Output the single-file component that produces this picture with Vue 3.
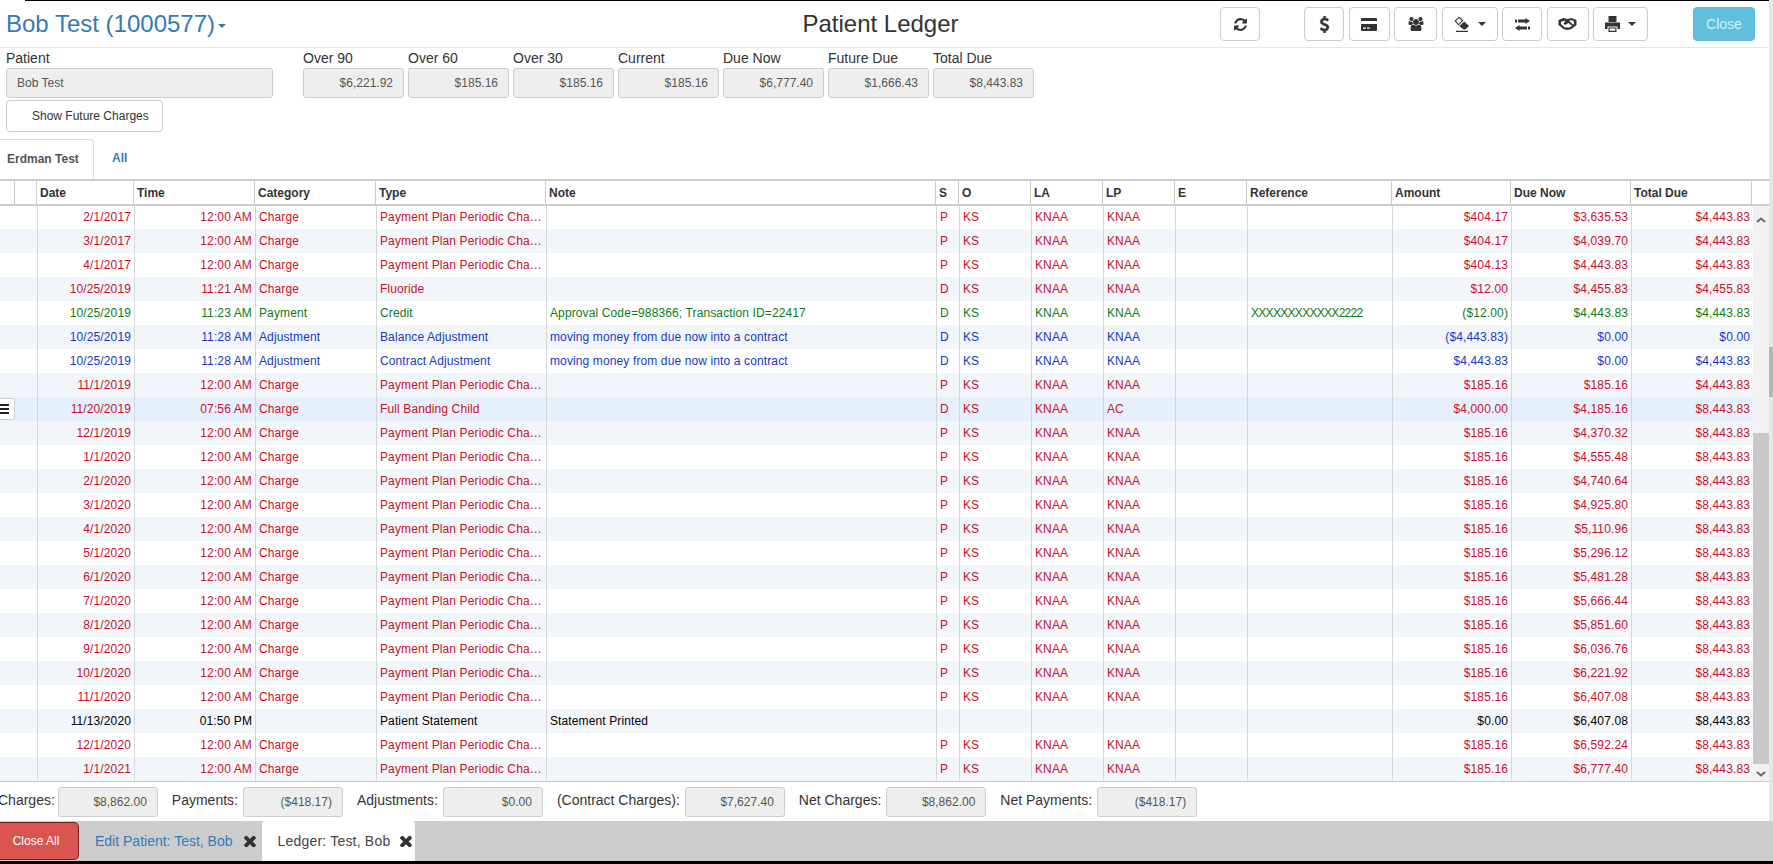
<template>
  <div class="page">
    <div class="shell">
      <div class="content">
        <div class="topline"></div>

        <!-- header -->
        <div class="header">
          <div class="patient-link">Bob Test (1000577)<span class="title-caret"></span></div>
          <div class="page-title">Patient Ledger</div>
          <div class="actions">
            <button class="btn w40 refresh">
              <svg width="15" height="15" viewBox="0 0 1792 1792"><path d="M1639 1056q0 5-1 7-64 268-268 434.5t-478 166.5q-146 0-282.5-55t-243.5-157l-129 129q-19 19-45 19t-45-19-19-45v-448q0-26 19-45t45-19h448q26 0 45 19t19 45-19 45l-137 137q71 66 161 102t187 36q134 0 250-65t186-179q11-17 53-117 8-23 30-23h192q13 0 22.5 9.5t9.5 22.5zm25-800v448q0 26-19 45t-45 19h-448q-26 0-45-19t-19-45 19-45l138-138q-148-137-349-137-134 0-250 65t-186 179q-11 17-53 117-8 23-30 23h-199q-13 0-22.5-9.5t-9.5-22.5v-7q65-268 270-434.5t480-166.5q146 0 284 55.5t245 156.5l130-129q19-19 45-19t45 19 19 45z" /></svg>
            </button>
            <button class="btn w40">
              <svg class="heavy" width="17" height="17" viewBox="0 0 1792 1792"><path d="M1362 1185q0 153-99.5 263.5t-258.5 136.5v175q0 14-9 23t-23 9h-135q-13 0-22.5-9.5t-9.5-22.5v-175q-66-9-127.5-31t-101.5-44.5-74-48-46.5-37.5-17.5-18q-17-21-2-41l103-135q7-10 23-12 15-2 24 9l2 2q113 99 243 125 37 8 74 8 81 0 142.5-43t61.5-122q0-28-15-53t-33.5-42-58.5-37.5-66-32-80-32.5q-39-16-61.5-25t-61.5-26.5-62.5-31-56.5-35.5-53.5-42.5-43.5-49-35.5-58-21-66.5-8.5-78q0-138 98-242t255-134v-180q0-13 9.5-22.5t22.5-9.5h135q14 0 23 9t9 23v176q57 6 110.5 23t87 33.5 63.5 37.5 39 29 15 14q17 18 5 38l-81 146q-8 15-23 16-14 3-27-7-3-3-14.5-12t-39-26.5-58.5-32-74.5-26-85.5-11.5q-95 0-155 43t-60 111q0 26 8.5 48t29.5 41.5 39.5 33 56 31 60.5 27 70 27.5q53 20 81 31.5t76 35 75.5 42.5 62 50 53 63.5 31.5 76.5 13 94z" /></svg>
            </button>
            <button class="btn w41">
              <svg width="16" height="13" viewBox="0 0 16 13">
                <path d="M1 0h14a1 1 0 0 1 1 1v2H0V1a1 1 0 0 1 1-1z" />
                <path d="M0 6h16v6a1 1 0 0 1-1 1H1a1 1 0 0 1-1-1z" />
                <rect x="2" y="9.5" width="3" height="1.2" fill="#fff" />
                <rect x="6" y="9.5" width="3" height="1.2" fill="#fff" />
              </svg>
            </button>
            <button class="btn w43">
              <svg width="18" height="14" viewBox="0 0 1920 1792"><path d="M593 896q-162 5-265 128h-134q-82 0-138-40.5t-56-118.5q0-353 124-353 6 0 43.5 21t97.5 42.5 119 21.5q67 0 133-23-5 37-5 66 0 139 81 256zm1071 637q0 120-73 189.5t-194 69.5h-874q-121 0-194-69.5t-73-189.5q0-53 3.5-103.5t14-109 26.5-108.5 43-97.5 62-81 85.5-53.5 111.5-20q10 0 43 21.5t73 48 107 48 135 21.5 135-21.5 107-48 73-48 43-21.5q61 0 111.5 20t85.5 53.5 62 81 43 97.5 26.5 108.5 14 109 3.5 103.5zm-1024-1277q0 106-75 181t-181 75-181-75-75-181 75-181 181-75 181 75 75 181zm704 384q0 159-112.5 271.5t-271.5 112.5-271.5-112.5-112.5-271.5 112.5-271.5 271.5-112.5 271.5 112.5 112.5 271.5zm576 225q0 78-56 118.5t-138 40.5h-134q-103-123-265-128 81-117 81-256 0-29-5-66 66 23 133 23 59 0 119-21.5t97.5-42.5 43.5-21q124 0 124 353zm-128-609q0 106-75 181t-181 75-181-75-75-181 75-181 181-75 181 75 75 181z" /></svg>
            </button>
            <button class="btn w56">
              <svg width="16" height="16" viewBox="0 0 16 16">
                <path d="M5 .5 9.4 4.6 4.6 9.4.5 5zM5 2 2 5l2.6 2.9 3.2-3.2z" fill-rule="evenodd" />
                <path d="M10.2 5.4 15 10l-3.7 3.4h-1.6L5.4 10.2z" />
                <rect x="2" y="14.8" width="12" height="1.2" />
              </svg>
              <span class="caret"></span>
            </button>
            <button class="btn w40">
              <svg width="15" height="13" viewBox="0 0 15 13">
                <path d="M0 1.500h10.500V0L15 3 10.500 6V4.500H0z" />
                <path d="M15 8.500H4.500V7L0 10 4.500 13v-1.500H15z" />
                <rect x="2" y="1" width="1" height="4" fill="#fff" />
                <rect x="12" y="8" width="1" height="4" fill="#fff" />
              </svg>
            </button>
            <button class="btn w42">
              <svg width="19" height="12" viewBox="0 0 18 12">
                <path d="M0 2 5 0l4 1 4-1 5 2v5l-5 4-4 1-4-1-5-4z" />
                <path d="M2.500 3.800 7 2.500 5 5.500l1.500 1.500 3.500-2 3.800 3L10 9.800l-4-.5-3.500-3.300zM10.500 2.600 13.500 2.200l2 1.400v2.200l-1 1z" fill="#fff" />
              </svg>
            </button>
            <button class="btn w55">
              <svg width="15" height="16" viewBox="0 0 15 16">
                <rect x="3.500" y="0" width="8" height="6" />
                <path d="M0 6.500h15V13h-2.500v-2.500h-10V13H0z" />
                <path d="M3.500 11.500h8V16h-8zM4.700 12.600v2.200h5.600v-2.200z" fill-rule="evenodd" />
              </svg>
              <span class="caret"></span>
            </button>
            <button class="btn-close">Close</button>
          </div>
        </div>

        <!-- balances -->
        <div class="summary">
          <div class="field patient-field">
            <label>Patient</label>
            <div class="readonly left">Bob Test</div>
          </div>
          <div v-for="b in balances" :key="b.label" class="field">
            <label>{{ b.label }}</label>
            <div class="readonly">{{ b.value }}</div>
          </div>
        </div>
        <button class="future-btn">Show Future Charges</button>

        <div class="tabs">
          <div class="tab active">Erdman Test</div>
          <div class="tab">All</div>
        </div>

        <!-- ledger grid -->
        <div class="grid">
          <div class="grid-head">
            <div></div>
            <div></div>
            <div v-for="h in headers" :key="h">{{ h }}</div>
            <div></div>
          </div>
          <div class="grid-body">
            <div class="rows">
              <div
                v-for="(r, i) in rows"
                :key="i"
                class="row"
                :class="[r.kind, { odd: i % 2 === 1, selected: i === 8 }]"
              >
                <div></div>
                <div class="r">{{ r.date }}</div>
                <div class="r">{{ r.time }}</div>
                <div>{{ r.cat }}</div>
                <div>{{ r.type }}</div>
                <div>{{ r.note }}</div>
                <div>{{ r.s }}</div>
                <div>{{ r.o }}</div>
                <div>{{ r.la }}</div>
                <div>{{ r.lp }}</div>
                <div></div>
                <div class="ref">{{ r.ref }}</div>
                <div class="r">{{ r.amount }}</div>
                <div class="r">{{ r.due }}</div>
                <div class="r">{{ r.total }}</div>
                <span v-if="i === 8" class="row-menu"><i></i><i></i><i></i></span>
              </div>
            </div>
            <div class="vscroll">
              <div class="arrow-up">
                <svg width="10" height="6" viewBox="0 0 10 6"><path d="M1 5 5 1.500 9 5" /></svg>
              </div>
              <div class="thumb"></div>
              <div class="arrow-down">
                <svg width="10" height="6" viewBox="0 0 10 6"><path d="M1 1 5 4.500 9 1" /></svg>
              </div>
            </div>
          </div>
        </div>

        <!-- totals -->
        <div class="totals">
          <template v-for="t in totals" :key="t.label">
            <span class="total-label">{{ t.label }}</span>
            <div class="readonly total-box">{{ t.value }}</div>
          </template>
        </div>
      </div>
      <div class="page-scroll"><div class="page-thumb"></div></div>
    </div>

    <!-- open windows -->
    <div class="taskbar">
      <button class="close-all">Close All</button>
      <div class="task">
        <span class="task-link">Edit Patient: Test, Bob</span>
        <svg class="x" width="12" height="12" viewBox="300 300 1200 1200"><path d="M1490 1322q0 40-28 68l-136 136q-28 28-68 28t-68-28l-294-294-294 294q-28 28-68 28t-68-28l-136-136q-28-28-28-68t28-68l294-294-294-294q-28-28-28-68t28-68l136-136q28-28 68-28t68 28l294 294 294-294q28-28 68-28t68 28l136 136q28 28 28 68t-28 68l-294 294 294 294q28 28 28 68z" /></svg>
      </div>
      <div class="task current">
        <span>Ledger: Test, Bob</span>
        <svg class="x" width="12" height="12" viewBox="300 300 1200 1200"><path d="M1490 1322q0 40-28 68l-136 136q-28 28-68 28t-68-28l-294-294-294 294q-28 28-68 28t-68-28l-136-136q-28-28-28-68t28-68l294-294-294-294q-28-28-28-68t28-68l136-136q28-28 68-28t68 28l294 294 294-294q28-28 68-28t68 28l136 136q28 28 28 68t-28 68l-294 294 294 294q28 28 28 68z" /></svg>
      </div>
    </div>
    <div class="desktop"></div>
  </div>
</template>

<script setup>
const balances = [
  { label: "Over 90", value: "$6,221.92" },
  { label: "Over 60", value: "$185.16" },
  { label: "Over 30", value: "$185.16" },
  { label: "Current", value: "$185.16" },
  { label: "Due Now", value: "$6,777.40" },
  { label: "Future Due", value: "$1,666.43" },
  { label: "Total Due", value: "$8,443.83" },
];

const headers = ["Date", "Time", "Category", "Type", "Note", "S", "O", "LA", "LP", "E", "Reference", "Amount", "Due Now", "Total Due"];

const totals = [
  { label: "Charges:", value: "$8,862.00" },
  { label: "Payments:", value: "($418.17)" },
  { label: "Adjustments:", value: "$0.00" },
  { label: "(Contract Charges):", value: "$7,627.40" },
  { label: "Net Charges:", value: "$8,862.00" },
  { label: "Net Payments:", value: "($418.17)" },
];

const PLAN = "Payment Plan Periodic Charge";

// plain charge row, most of the ledger looks like this
function charge(date, amount, due, total, extra = {}) {
  return { kind: "charge", date, time: "12:00 AM", cat: "Charge", type: PLAN, note: "", s: "P", o: "KS", la: "KNAA", lp: "KNAA", ref: "", amount, due, total, ...extra };
}

const MOVE = "moving money from due now into a contract";

const rows = [
  charge("2/1/2017", "$404.17", "$3,635.53", "$4,443.83"),
  charge("3/1/2017", "$404.17", "$4,039.70", "$4,443.83"),
  charge("4/1/2017", "$404.13", "$4,443.83", "$4,443.83"),
  charge("10/25/2019", "$12.00", "$4,455.83", "$4,455.83", { time: "11:21 AM", type: "Fluoride", s: "D" }),
  charge("10/25/2019", "($12.00)", "$4,443.83", "$4,443.83", { kind: "payment", time: "11:23 AM", cat: "Payment", type: "Credit", note: "Approval Code=988366; Transaction ID=22417", s: "D", ref: "XXXXXXXXXXXX2222" }),
  charge("10/25/2019", "($4,443.83)", "$0.00", "$0.00", { kind: "adjust", time: "11:28 AM", cat: "Adjustment", type: "Balance Adjustment", note: MOVE, s: "D" }),
  charge("10/25/2019", "$4,443.83", "$0.00", "$4,443.83", { kind: "adjust", time: "11:28 AM", cat: "Adjustment", type: "Contract Adjustment", note: MOVE, s: "D" }),
  charge("11/1/2019", "$185.16", "$185.16", "$4,443.83"),
  charge("11/20/2019", "$4,000.00", "$4,185.16", "$8,443.83", { time: "07:56 AM", type: "Full Banding Child", s: "D", lp: "AC" }),
  charge("12/1/2019", "$185.16", "$4,370.32", "$8,443.83"),
  charge("1/1/2020", "$185.16", "$4,555.48", "$8,443.83"),
  charge("2/1/2020", "$185.16", "$4,740.64", "$8,443.83"),
  charge("3/1/2020", "$185.16", "$4,925.80", "$8,443.83"),
  charge("4/1/2020", "$185.16", "$5,110.96", "$8,443.83"),
  charge("5/1/2020", "$185.16", "$5,296.12", "$8,443.83"),
  charge("6/1/2020", "$185.16", "$5,481.28", "$8,443.83"),
  charge("7/1/2020", "$185.16", "$5,666.44", "$8,443.83"),
  charge("8/1/2020", "$185.16", "$5,851.60", "$8,443.83"),
  charge("9/1/2020", "$185.16", "$6,036.76", "$8,443.83"),
  charge("10/1/2020", "$185.16", "$6,221.92", "$8,443.83"),
  charge("11/1/2020", "$185.16", "$6,407.08", "$8,443.83"),
  charge("11/13/2020", "$0.00", "$6,407.08", "$8,443.83", { kind: "statement", time: "01:50 PM", cat: "", type: "Patient Statement", note: "Statement Printed", s: "", o: "", la: "", lp: "" }),
  charge("12/1/2020", "$185.16", "$6,592.24", "$8,443.83"),
  charge("1/1/2021", "$185.16", "$6,777.40", "$8,443.83"),
];
</script>

<style>
html,
body {
  margin: 0;
  overflow: hidden;
}
</style>

<style scoped>
.page {
  width: 1773px;
  height: 864px;
  display: flex;
  flex-direction: column;
  overflow: hidden;
  background: #fff;
  font-family: "Liberation Sans", Arial, sans-serif;
  font-size: 14px;
  color: #333;
}

.shell {
  display: flex;
  height: 821px;
}

.content {
  width: 1769px;
  display: flex;
  flex-direction: column;
  overflow: hidden;
}

.page-scroll {
  width: 4px;
  background: #e6e6e6;
}

.page-thumb {
  margin-top: 347px;
  height: 50px;
  background: #b4b4b4;
}

.topline {
  height: 1px;
  margin-left: 25px;
  background: #000;
}

.header {
  height: 46px;
  padding: 0 14px 0 6px;
  display: grid;
  grid-template-columns: 1fr auto 1fr;
  align-items: center;
  border-bottom: 1px solid #e5e5e5;
}

.patient-link {
  font-size: 24px;
  color: #337ab7;
  display: flex;
  align-items: center;
}

.title-caret {
  margin: 3px 0 0 3px;
  border-top: 4px solid #337ab7;
  border-left: 4px solid transparent;
  border-right: 4px solid transparent;
}

.page-title {
  font-size: 24px;
  color: #333;
}

.actions {
  display: flex;
  justify-content: flex-end;
  gap: 4.5px;
}

.btn {
  height: 34px;
  padding: 0;
  background: #fff;
  border: 1px solid #ccc;
  border-radius: 4px;
  display: flex;
  align-items: center;
  justify-content: center;
  gap: 8px;
  box-sizing: border-box;
}

.btn svg {
  fill: #333;
}

.btn svg.heavy {
  stroke: #333;
  stroke-width: 50;
}

.refresh {
  margin-right: 39.5px;
}

.w40 { width: 40px; }
.w41 { width: 41px; }
.w42 { width: 42px; }
.w43 { width: 43px; }
.w55 { width: 55px; }
.w56 { width: 56px; }

.caret {
  border-top: 4px solid #333;
  border-left: 4px solid transparent;
  border-right: 4px solid transparent;
}

.btn-close {
  width: 62px;
  height: 34px;
  margin-left: 40.5px;
  background: #5fbfdc;
  border: 1px solid #5bbcd9;
  border-radius: 4px;
  color: #d5eff7;
  font: 14px "Liberation Sans", Arial, sans-serif;
}

.summary {
  display: flex;
  gap: 4px;
  padding-left: 6px;
}

.field {
  width: 101px;
}

.patient-field {
  width: 266.5px;
  margin-right: 26.5px;
}

.field label {
  display: block;
  height: 20px;
  line-height: 20px;
  font-size: 14px;
}

.readonly {
  height: 30px;
  line-height: 28px;
  box-sizing: border-box;
  background: #eee;
  border: 1px solid #ccc;
  border-radius: 3px;
  font-size: 12px;
  color: #555;
  text-align: right;
  padding: 0 10px;
}

.readonly.left {
  text-align: left;
}

.future-btn {
  width: 157px;
  height: 32px;
  margin: 2px 0 0 6px;
  padding: 0 0 0 25px;
  background: #fff;
  border: 1px solid #ccc;
  border-radius: 4px;
  font: 12px "Liberation Sans", Arial, sans-serif;
  color: #333;
  text-align: left;
}

.tabs {
  display: flex;
  height: 40px;
  margin-top: 7px;
}

.tab {
  padding: 0 18px;
  line-height: 39px;
  font-size: 12px;
  font-weight: bold;
  color: #337ab7;
}

.tab.active {
  width: 94px;
  box-sizing: border-box;
  padding: 0 0 0 7px;
  color: #555;
  border: 1px solid #ddd;
  border-left: 0;
  border-bottom: 0;
  border-radius: 0 4px 0 0;
}

.grid {
  border-top: 2px solid #ccc;
  border-bottom: 1px solid #ccc;
  font-size: 12px;
}

.grid-head {
  height: 23px;
  display: grid;
  grid-template-columns: 15px 22px 97px 121px 121px 170px 390px 23px 72px 72px 72px 72px 145px 119px 120px 121px 17px;
  border-bottom: 2px solid #ccc;
  font-weight: bold;
  line-height: 24px;
}

.grid-head > div {
  border-right: 1px solid #ccc;
  padding-left: 3px;
  box-sizing: border-box;
}

.grid-head > div:last-child {
  border-right: 0;
}

.grid-body {
  height: 575px;
  display: flex;
}

.rows {
  flex: 1;
  overflow: hidden;
}

.row {
  position: relative;
  height: 24px;
  line-height: 24px;
  display: grid;
  grid-template-columns: 38px 97px 121px 121px 170px 390px 23px 72px 72px 72px 72px 145px 119px 120px 121px;
  letter-spacing: 0.12px;
}

.row:first-child {
  margin-top: -1px;
}

.row > div {
  padding: 0 3px;
  box-sizing: border-box;
  border-right: 1px solid #d4d8dd;
  white-space: nowrap;
  overflow: hidden;
  text-overflow: ellipsis;
}

.row > div:last-of-type {
  border-right: 0;
}

.row > .r {
  text-align: right;
}

.row > .ref {
  letter-spacing: -0.7px;
}

.row.odd {
  background: #f2f6fb;
}

.row.selected {
  background: #e6f0fc;
}

.charge { color: #c5102c; }
.payment { color: #0d7a14; }
.adjust { color: #1438c4; }
.statement { color: #000; }

.row-menu {
  position: absolute;
  left: 0;
  top: 1px;
  width: 15px;
  height: 22px;
  box-sizing: border-box;
  padding: 5px 5px 0 0;
  background: #fff;
  border: 1px solid #ccc;
  border-left: 0;
  border-radius: 0 3px 3px 0;
  display: flex;
  flex-direction: column;
  gap: 2px;
}

.row-menu i {
  display: block;
  height: 2px;
  background: #222;
}

.vscroll {
  width: 16px;
  background: #f1f1f1;
  display: flex;
  flex-direction: column;
}

.vscroll svg {
  fill: none;
  stroke: #666;
  stroke-width: 2;
}

.arrow-up {
  height: 20px;
  padding-top: 6px;
  box-sizing: border-box;
  text-align: center;
}

.thumb {
  height: 331px;
  margin-top: 207px;
  background: #c8c8c8;
}

.arrow-down {
  flex: 1;
  padding-top: 2px;
  text-align: center;
}

.totals {
  height: 39px;
  margin-left: -2px;
  display: flex;
  align-items: center;
  font-size: 14px;
  white-space: nowrap;
}

.total-label {
  margin-right: 5px;
  margin-top: -3px;
}

.total-label:first-child {
  margin-right: 3px;
}

.total-box {
  width: 100px;
  margin-right: 14px;
  flex-shrink: 0;
}

.taskbar {
  height: 40px;
  display: flex;
  background: #ccc;
}

.close-all {
  width: 79px;
  height: 38px;
  margin-top: 1px;
  padding: 0 6px 0 0;
  background: #d9534f;
  border: 1px solid #7a1f1c;
  border-left: 0;
  border-radius: 0 5px 5px 0;
  color: #fff;
  font: 12px "Liberation Sans", Arial, sans-serif;
}

.task {
  display: flex;
  align-items: center;
  gap: 11px;
  padding: 0 6px 0 16px;
  font-size: 14px;
}

.task.current {
  background: #fff;
  padding-right: 3px;
  gap: 10px;
  letter-spacing: 0.2px;
  border-radius: 3px 3px 0 0;
  color: #444;
}

.task-link {
  color: #337ab7;
}

.x {
  fill: #333;
}

.desktop {
  flex: 1;
  background: #000;
}
</style>
